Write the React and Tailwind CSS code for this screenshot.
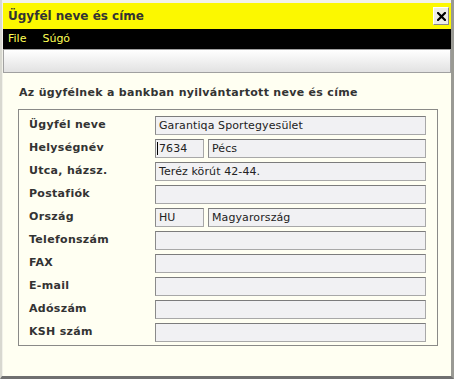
export default function App() {
  const font = { fontFamily: '"DejaVu Sans", Verdana, sans-serif' };
  const rows = [
    { label: "Ügyfél neve", value: "Garantiqa Sportegyesület" },
    { label: "Helységnév", split: ["7634", "Pécs"], caret: true },
    { label: "Utca, házsz.", value: "Teréz körút 42-44." },
    { label: "Postafiók", value: "" },
    { label: "Ország", split: ["HU", "Magyarország"] },
    { label: "Telefonszám", value: "" },
    { label: "FAX", value: "" },
    { label: "E-mail", value: "" },
    { label: "Adószám", value: "" },
    { label: "KSH szám", value: "" },
  ];
  const inputCls =
    "h-[19px] bg-[#f1f1f3] border border-[#a8a8a8] border-t-[#7c7c7c] border-l-[#8a8a8a] text-[11px] leading-[17px] text-[#222] pl-[3px] whitespace-nowrap overflow-hidden tracking-[0.1px]";
  return (
    <div
      className="w-[454px] h-[379px] bg-[#f2f2ea] border-l-[2px] border-l-[#d8d8d0] border-r-[3px] border-r-[#9a9a94] border-b-[3px] border-b-[#707070] pt-[3px] pl-[1px] flex flex-col overflow-hidden"
      style={font}
    >
      <div className="h-[26px] bg-[#fcf800] flex items-center justify-between pl-[5px] pr-[2px] shrink-0">
        <span className="text-[12px] font-bold text-[#333]">Ügyfél neve és címe</span>
        <div className="w-[16px] h-[18px] bg-[#ecece6] border border-[#fff] border-r-[#888] border-b-[#888] flex items-center justify-center">
          <svg width="9" height="9" viewBox="0 0 9 9">
            <path d="M1 1 L8 8 M8 1 L1 8" stroke="#000" strokeWidth="2.2" strokeLinecap="square" />
          </svg>
        </div>
      </div>
      <div className="h-[20px] bg-black flex items-center gap-[16px] pl-[5px] shrink-0 text-[11px] text-[#ffff55]">
        <span>File</span>
        <span>Súgó</span>
      </div>
      <div className="h-[24px] border border-[#a0a0a0] bg-gradient-to-b from-white to-[#e2e2e2] shrink-0" />
      <div className="flex-1 bg-[#fffff2] pt-[13px] pl-[15px] pr-[12px]">
        <div className="text-[11px] font-bold text-[#333] leading-[14px] pl-[1px] tracking-[0.3px]">
          Az ügyfélnek a bankban nyilvántartott neve és címe
        </div>
        <div className="mt-[9px] w-[420px] border border-[#8a8a88] pt-[6px] pb-[3px] pl-[10px] pr-[11px] flex flex-col gap-[4px]">
          {rows.map((r) => (
            <div key={r.label} className="flex items-center h-[19px]">
              <div className="w-[126px] text-[11px] font-bold text-[#333] tracking-[0.3px]">{r.label}</div>
              {r.split ? (
                <div className="flex gap-[4px] w-[271px]">
                  <div className={inputCls + " w-[49px] relative"}>
                    {r.caret && <span className="absolute left-[1px] top-[2px] w-[1px] h-[13px] bg-black" />}
                    {r.split[0]}
                  </div>
                  <div className={inputCls + " flex-1"}>{r.split[1]}</div>
                </div>
              ) : (
                <div className={inputCls + " w-[271px]"}>{r.value}</div>
              )}
            </div>
          ))}
        </div>
      </div>
    </div>
  );
}
